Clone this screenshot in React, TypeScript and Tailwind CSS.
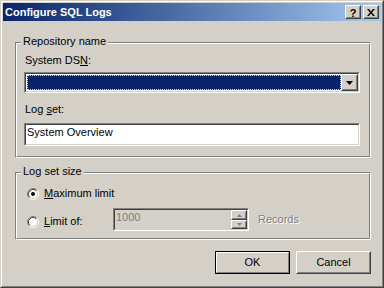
import type { ReactNode } from "react";

function Raised({ className = "", children }: { className?: string; children?: ReactNode }) {
  return (
    <div className={`border border-t-white border-l-white border-r-[#404040] border-b-[#404040] bg-[#d4d0c8] ${className}`}>
      <div className="h-full w-full border border-t-[#d4d0c8] border-l-[#d4d0c8] border-r-[#808080] border-b-[#808080] flex items-center justify-center">
        {children}
      </div>
    </div>
  );
}

function Sunken({ className = "", children }: { className?: string; children?: ReactNode }) {
  return (
    <div className={`border border-t-[#808080] border-l-[#808080] border-r-white border-b-white ${className}`}>
      <div className="h-full w-full border border-t-[#404040] border-l-[#404040] border-r-[#d4d0c8] border-b-[#d4d0c8] flex">
        {children}
      </div>
    </div>
  );
}

function GroupBox({ label, className = "", children }: { label: string; className?: string; children?: ReactNode }) {
  return (
    <div className={`relative border border-t-[#808080] border-l-[#808080] border-r-white border-b-white ${className}`}>
      <div className="h-full border border-t-white border-l-white border-r-[#808080] border-b-[#808080]">
        {children}
      </div>
      <span className="absolute left-[5px] -top-[8px] bg-[#d4d0c8] px-[2px] leading-[13px]">{label}</span>
    </div>
  );
}

function Radio({ checked }: { checked?: boolean }) {
  return (
    <svg width="12" height="12" viewBox="0 0 12 12" className="shrink-0">
      <circle cx="6" cy="6" r="4.5" fill="#fff" />
      <path d="M2.11 9.89 A5.5 5.5 0 0 1 9.89 2.11" fill="none" stroke="#808080" />
      <path d="M9.89 2.11 A5.5 5.5 0 0 1 2.11 9.89" fill="none" stroke="#fff" />
      <path d="M2.82 9.18 A4.5 4.5 0 0 1 9.18 2.82" fill="none" stroke="#404040" />
      <path d="M9.18 2.82 A4.5 4.5 0 0 1 2.82 9.18" fill="none" stroke="#d4d0c8" />
      {checked && <circle cx="6" cy="6" r="2" fill="#000" />}
    </svg>
  );
}

export default function App() {
  return (
    <div className="w-[384px] h-[288px] bg-[#d4d0c8] text-[11px] leading-[13px] text-black font-['Liberation_Sans',Arial,sans-serif]">
      <div className="h-full border border-t-[#d4d0c8] border-l-[#d4d0c8] border-r-[#404040] border-b-[#404040]">
        <div className="h-full border border-t-white border-l-white border-r-[#808080] border-b-[#808080] p-px flex flex-col">
          {/* caption */}
          <div className="h-[18px] shrink-0 flex items-center pl-[2px] pr-[2px] bg-gradient-to-r from-[#0a246a] to-[#a6caf0]">
            <span className="flex-1 font-bold text-white">Configure SQL Logs</span>
            <Raised className="w-[16px] h-[14px]">
              <span className="font-bold text-[11px] leading-[10px] mt-px">?</span>
            </Raised>
            <Raised className="w-[16px] h-[14px] ml-[2px]">
              <svg width="8" height="7" viewBox="0 0 8 7">
                <path d="M0 0h2l2 2.5L6 0h2L5 3.5 8 7H6L4 4.5 2 7H0l3-3.5z" fill="#000" />
              </svg>
            </Raised>
          </div>

          <GroupBox label="Repository name" className="ml-[12px] mt-[21px] w-[356px] h-[116px]">
            <div className="pl-[7px] pt-[10px]">
              <div className="ml-px">System DS<span className="underline">N</span>:</div>
              <Sunken className="mt-[5px] w-[336px] h-[21px] bg-white">
                <div className="flex-1 pl-px py-px">
                  <div className="h-full bg-[#0a246a] border border-dotted border-[#f5db95]" />
                </div>
                <Raised className="w-[17px] h-full">
                  <svg width="7" height="4" viewBox="0 0 7 4">
                    <path d="M0 0h7L3.5 4z" fill="#000" />
                  </svg>
                </Raised>
              </Sunken>
              <div className="ml-px mt-[10px]">Log <span className="underline">s</span>et:</div>
              <Sunken className="mt-[7px] w-[336px] h-[23px] bg-white">
                <div className="pl-px pt-px">System Overview</div>
              </Sunken>
            </div>
          </GroupBox>

          <GroupBox label="Log set size" className="ml-[12px] mt-[14px] w-[356px] h-[68px]">
            <div className="flex items-center gap-[5px] ml-[10px] mt-[13px] h-[13px]">
              <Radio checked />
              <span><span className="underline">M</span>aximum limit</span>
            </div>
            <div className="flex items-start mt-[8px]">
              <div className="w-[86px] ml-[10px] mt-[7px] h-[13px] flex items-center gap-[5px]">
                <Radio />
                <span><span className="underline">L</span>imit of:</span>
              </div>
              <Sunken className="w-[136px] h-[23px] bg-[#d4d0c8]">
                <div className="flex-1 pl-px pt-px text-[#808080]">1000</div>
                <div className="w-[16px] flex flex-col">
                  <Raised className="h-[10px]">
                    <svg width="5" height="3" viewBox="0 0 5 3"><path d="M2.5 0L5 3H0z" fill="#808080" /></svg>
                  </Raised>
                  <Raised className="h-[9px]">
                    <svg width="5" height="3" viewBox="0 0 5 3"><path d="M0 0h5L2.5 3z" fill="#808080" /></svg>
                  </Raised>
                </div>
              </Sunken>
              <span className="ml-[9px] self-center text-[#808080] [text-shadow:1px_1px_0_#fff]">Records</span>
            </div>
          </GroupBox>

          <div className="ml-[12px] w-[356px] mt-[11px] flex justify-end gap-[6px]">
            <div className="w-[75px] h-[23px] border border-black">
              <div className="h-full border border-t-white border-l-white border-r-[#808080] border-b-[#808080] flex items-center justify-center">
                OK
              </div>
            </div>
            <Raised className="w-[75px] h-[23px]">Cancel</Raised>
          </div>
        </div>
      </div>
    </div>
  );
}
